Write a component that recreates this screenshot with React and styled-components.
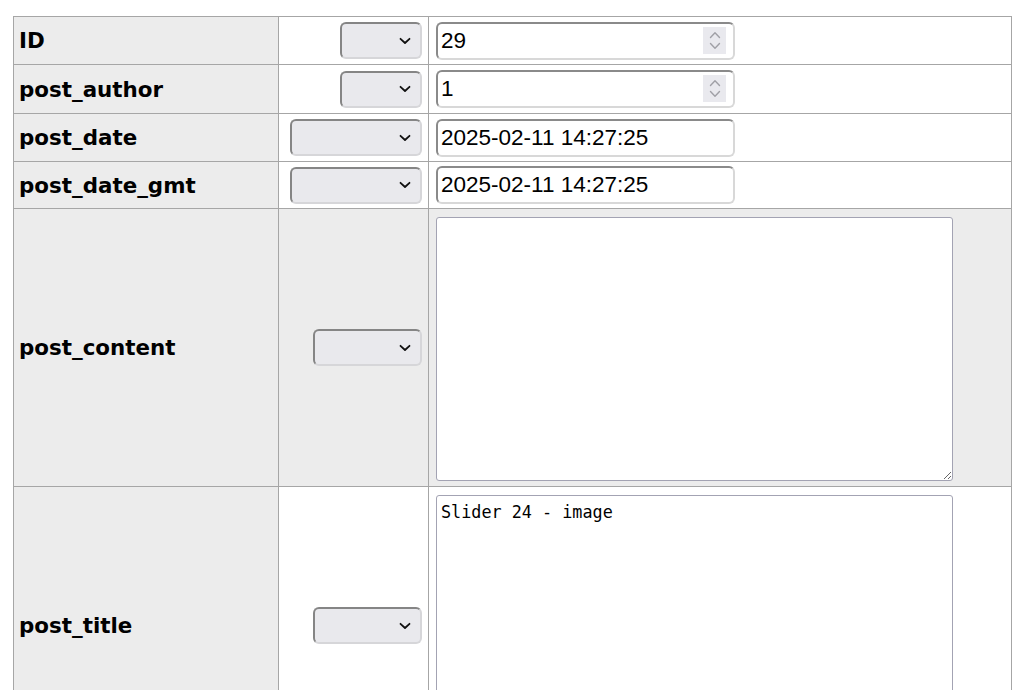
import React from "react";
import styled, { createGlobalStyle } from "styled-components";

const GlobalStyle = createGlobalStyle`
  body {
    margin: 0;
    background: #ffffff;
    font-family: "DejaVu Sans", Verdana, sans-serif;
  }
`;

const Sheet = styled.table`
  border-collapse: collapse;
  table-layout: fixed;
  width: 998px;
  margin: 16px 0 0 13px;
`;

const Row = styled.tr`
  height: ${(p) => p.h}px;
  background: ${(p) => (p.shaded ? "#ececec" : "#ffffff")};
`;

const Label = styled.th`
  border: 1px solid #a6a6a6;
  background: #ececec;
  text-align: left;
  vertical-align: middle;
  padding: 0 5px;
  font-family: "DejaVu Sans", Verdana, sans-serif;
  font-weight: bold;
  font-size: 21.4px;
  color: #000;
`;

const FuncCell = styled.td`
  border: 1px solid #a6a6a6;
  text-align: right;
  vertical-align: middle;
  padding: 0 6px 0 0;
`;

const ValueCell = styled.td`
  border: 1px solid #a6a6a6;
  vertical-align: ${(p) => (p.top ? "top" : "middle")};
  padding: ${(p) => (p.top ? "8px 7px 0" : "0 7px")};
`;

const SelectBox = styled.span`
  position: relative;
  display: inline-block;
  vertical-align: middle;
  width: ${(p) => p.w}px;
  height: 37px;
`;

const Select = styled.select`
  appearance: none;
  width: 100%;
  height: 100%;
  box-sizing: border-box;
  background: #e9e9ed;
  border: 2px solid #d6d6d9;
  border-top-color: #858585;
  border-left-color: #858585;
  border-radius: 6px;
  font-size: 16px;
  outline: none;
`;

const Chevron = styled.svg`
  position: absolute;
  right: 11px;
  top: 50%;
  margin-top: -4px;
  pointer-events: none;
`;

const FieldBox = styled.span`
  position: relative;
  display: inline-block;
  vertical-align: middle;
  width: 299px;
  height: 38px;
`;

const Field = styled.input`
  width: 100%;
  height: 100%;
  box-sizing: border-box;
  background: #fff;
  border: 2px solid #d8d8d8;
  border-top-color: #8a8a8a;
  border-left-color: #8a8a8a;
  border-radius: 6px;
  padding: 0 3px;
  font-family: "Liberation Sans", Arial, sans-serif;
  font-size: 22.5px;
  color: #000;
  outline: none;
  appearance: textfield;

  &::-webkit-inner-spin-button,
  &::-webkit-outer-spin-button {
    -webkit-appearance: none;
    margin: 0;
  }
`;

const Spinner = styled.span`
  position: absolute;
  right: 9px;
  top: 5px;
  width: 23px;
  height: 27px;
  background: #e9e9ee;
  display: flex;
  flex-direction: column;
  align-items: center;
  justify-content: center;
  gap: 3px;
  pointer-events: none;
`;

const TextBox = styled.textarea`
  display: block;
  width: 517px;
  height: 264px;
  box-sizing: border-box;
  border: 1px solid #a3a3b3;
  border-radius: 3px;
  background: #fff;
  padding: 6px 4px;
  font-family: "DejaVu Sans Mono", monospace;
  font-size: 16.8px;
  color: #000;
  outline: none;
  resize: both;
`;

const DownMark = () => (
  <Chevron width="12" height="8" viewBox="0 0 12 8">
    <path d="M1.5 1.8 L6 6 L10.5 1.8" fill="none" stroke="#111" strokeWidth="1.8" strokeLinecap="round" strokeLinejoin="round" />
  </Chevron>
);

const Arrow = ({ up }) => (
  <svg width="12" height="8" viewBox="0 0 12 8">
    <path
      d={up ? "M1.5 6.5 L6 1.8 L10.5 6.5" : "M1.5 1.5 L6 6.2 L10.5 1.5"}
      fill="none"
      stroke="#a0a0a6"
      strokeWidth="1.4"
      strokeLinecap="round"
      strokeLinejoin="round"
    />
  </svg>
);

const FuncSelect = ({ w }) => (
  <SelectBox w={w}>
    <Select defaultValue="">
      <option value=""></option>
    </Select>
    <DownMark />
  </SelectBox>
);

const NumberField = ({ value }) => (
  <FieldBox>
    <Field type="number" defaultValue={value} />
    <Spinner>
      <Arrow up />
      <Arrow />
    </Spinner>
  </FieldBox>
);

const TextField = ({ value }) => (
  <FieldBox>
    <Field type="text" defaultValue={value} />
  </FieldBox>
);

const rows = [
  { name: "ID", h: 48, func: 82, kind: "number", value: "29" },
  { name: "post_author", h: 49, func: 82, kind: "number", value: "1" },
  { name: "post_date", h: 48, func: 132, kind: "text", value: "2025-02-11 14:27:25" },
  { name: "post_date_gmt", h: 47, func: 132, kind: "text", value: "2025-02-11 14:27:25" },
  { name: "post_content", h: 278, func: 109, kind: "area", value: "", shaded: true },
  { name: "post_title", h: 278, func: 109, kind: "area", value: "Slider 24 - image" },
];

const App = () => {
  return (
    <>
      <GlobalStyle />
      <Sheet>
        <colgroup>
          <col style={{ width: 265 }} />
          <col style={{ width: 150 }} />
          <col style={{ width: 583 }} />
        </colgroup>
        <tbody>
          {rows.map((r) => (
            <Row key={r.name} h={r.h} shaded={r.shaded}>
              <Label>{r.name}</Label>
              <FuncCell>
                <FuncSelect w={r.func} />
              </FuncCell>
              <ValueCell top={r.kind === "area"}>
                {r.kind === "number" && <NumberField value={r.value} />}
                {r.kind === "text" && <TextField value={r.value} />}
                {r.kind === "area" && <TextBox defaultValue={r.value} />}
              </ValueCell>
            </Row>
          ))}
        </tbody>
      </Sheet>
    </>
  );
};

export default App;
